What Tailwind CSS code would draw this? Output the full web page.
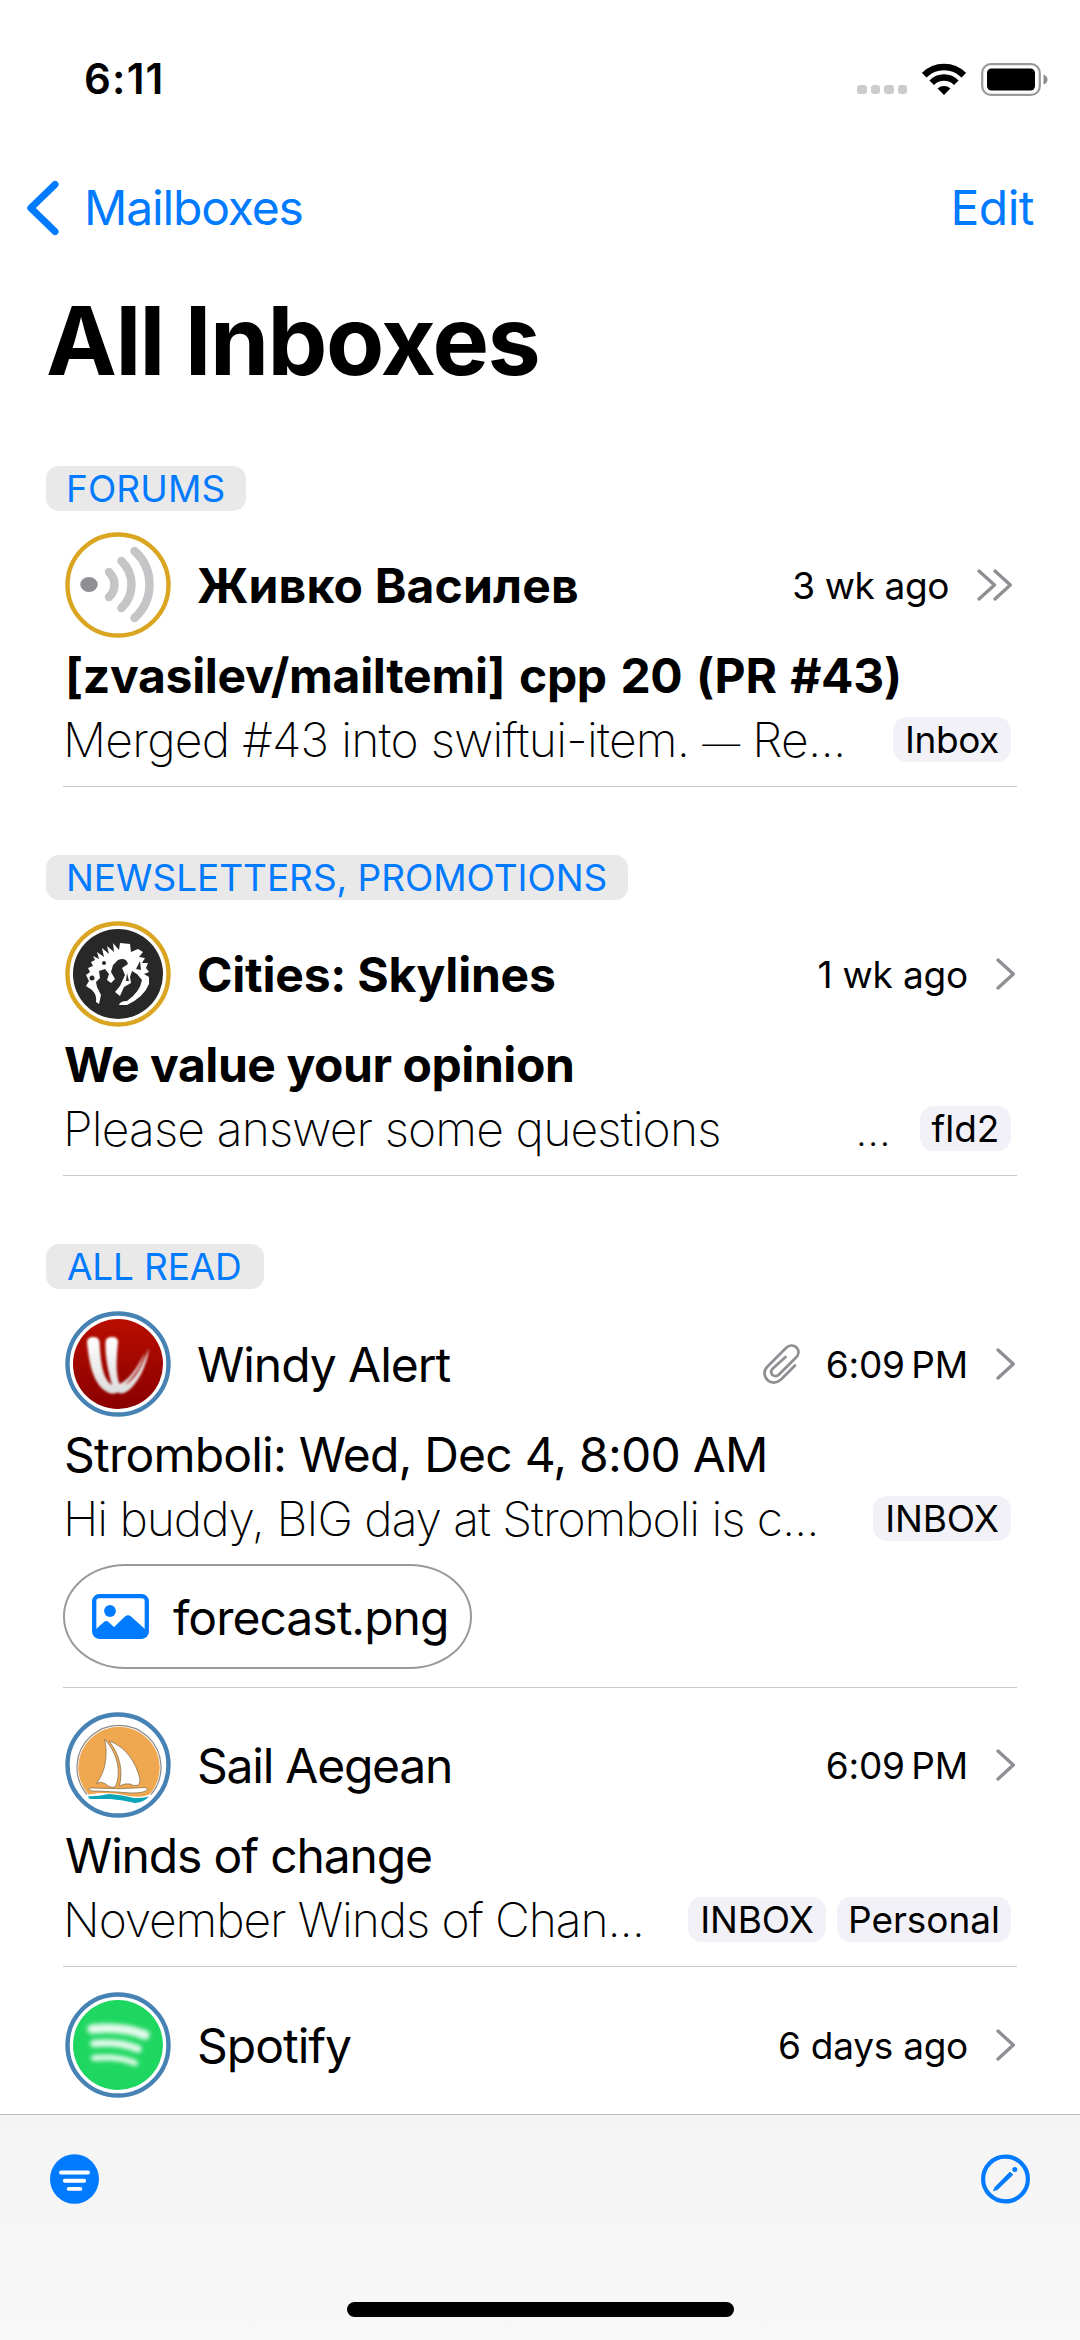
<!DOCTYPE html>
<html lang="en">
<head>
<meta charset="utf-8">
<title>All Inboxes</title>
<script src="https://cdn.jsdelivr.net/npm/@tailwindcss/browser@4"></script>
</head>
<body class="bg-white">
<div class="flex h-[2340px] w-[1080px] flex-col overflow-hidden bg-white font-['Inter',sans-serif] text-black">

  <!-- Status bar -->
  <div class="flex h-[158px] shrink-0 items-center justify-between pr-[32px] pl-[84px]">
    <span class="text-[42px] leading-none font-semibold tracking-[1.2px]">6:11</span>
    <div class="flex items-center">
      <div class="mt-[21px] mr-[15px] flex gap-[4px]">
        <i class="size-[9.5px] rounded-[3px] bg-[#cccccc]"></i>
        <i class="size-[9.5px] rounded-[3px] bg-[#cccccc]"></i>
        <i class="size-[9.5px] rounded-[3px] bg-[#cccccc]"></i>
        <i class="size-[9.5px] rounded-[3px] bg-[#cccccc]"></i>
      </div>
      <svg class="mr-[15px] h-8 w-11" viewBox="0 0 44 32" fill="none" stroke="#000" stroke-width="6.5">
        <path d="M2.2 12.2A28 28 0 0 1 41.8 12.2"/>
        <path d="M9.7 19.7A17.4 17.4 0 0 1 34.3 19.7"/>
        <path d="M22 32L15.6 25.5A9.5 9.5 0 0 1 28.4 25.5Z" fill="#000" stroke="none"/>
      </svg>
      <svg class="h-[33px] w-[67px]" viewBox="0 0 67 33">
        <rect x="1.2" y="1.2" width="57.6" height="30.6" rx="8.5" fill="none" stroke="#9a9a9a" stroke-width="2.2"/>
        <rect x="6" y="5.5" width="48" height="22" rx="4.5"/>
        <path d="M62.5 11.5Q66.5 13 66.5 16.5Q66.5 20 62.5 21.5Z" fill="#8c8c8c"/>
      </svg>
    </div>
  </div>

  <!-- Navigation -->
  <nav class="flex h-[99px] shrink-0 items-center justify-between pr-[46px] pl-[26px] text-[48px] leading-none text-[#007aff]">
    <a class="flex items-center">
      <svg class="mr-[25px] h-[56px] w-[33px]" viewBox="0 0 33 56" fill="none" stroke="currentColor" stroke-width="7" stroke-linecap="round" stroke-linejoin="round"><path d="M29 4.5L4.8 28L29 51.5"/></svg>
      <span class="tracking-[-1.15px]">Mailboxes</span>
    </a>
    <a class="tracking-[-0.49px]">Edit</a>
  </nav>

  <h1 class="flex h-[166px] shrink-0 items-center pl-[46px] text-[95px] leading-none font-bold tracking-[-1.53px]">All Inboxes</h1>

  <main class="min-h-0 flex-1 overflow-hidden pt-[43px]">

    <!-- Forums -->
    <section class="mb-[68px]">
      <h2 class="ml-[46px] flex h-[45px] w-[200px] items-center rounded-[13px] bg-[#e9e9e9] pl-[20px] text-[37px] leading-none tracking-[0.12px] text-[#007aff]">FORUMS</h2>
      <article class="mx-[63px] mt-[21px] border-b border-[#cbcbcc] pb-4">
        <header class="flex h-[106px] items-center pr-[5px] pl-[2px]">
          <svg class="size-[106px]" viewBox="0 0 106 106" fill="none">
            <circle cx="53" cy="53" r="50.5" stroke="#daa520" stroke-width="4.4"/>
            <ellipse cx="24" cy="52.5" rx="8.7" ry="7.4" fill="#8e8e93"/>
            <g stroke="#c5c5c7" stroke-width="8.5" stroke-linecap="round">
              <path d="M44 40A17 17 0 0 1 44 65"/>
              <path d="M56.5 29A32.6 32.6 0 0 1 56.5 76"/>
              <path d="M69.5 19A45 45 0 0 1 69.5 86"/>
            </g>
          </svg>
          <span class="ml-[26px] pt-[2px] text-[48px] leading-none font-bold tracking-[0.18px]">Живко Василев</span>
          <time class="mr-[28px] ml-auto text-[37px] leading-none tracking-[-0.39px]">3 wk ago</time>
          <svg class="h-8 w-[35px]" viewBox="0 0 35 32" fill="none" stroke="#8e8e93" stroke-width="3.3" stroke-linecap="round" stroke-linejoin="round"><path d="M2 2L17.5 16L2 30M18 2L33.3 16L18 30"/></svg>
        </header>
        <h3 class="mt-[7px] flex h-[60px] items-center pt-[2px] pl-[2px] text-[48px] leading-none font-bold tracking-[-0.3px] whitespace-pre [word-spacing:2.5px]">[zvasilev/mailtemi] cpp 20 (PR #43)</h3>
        <div class="mt-1 flex h-[61px] items-center pr-[6px]">
          <p class="text-[48px] leading-none font-[170] tracking-[-0.72px]">Merged #43 into swiftui-item. <span class="text-[38px]">—</span> Re...</p>
          <span class="ml-auto flex h-[45px] w-[118px] items-center justify-center rounded-[14px] bg-[#f2f1f7] text-[37px] leading-none tracking-[-0.45px]">Inbox</span>
        </div>
      </article>
    </section>

    <!-- Newsletters -->
    <section class="mb-[68px]">
      <h2 class="ml-[46px] flex h-[45px] w-[582px] items-center rounded-[13px] bg-[#e9e9e9] pl-[20px] text-[37px] leading-none tracking-[-0.04px] text-[#007aff]">NEWSLETTERS, PROMOTIONS</h2>
      <article class="mx-[63px] mt-[21px] border-b border-[#cbcbcc] pb-4">
        <header class="flex h-[106px] items-center pr-[2px] pl-[2px]">
          <svg class="size-[106px]" viewBox="0 0 106 106" fill="none">
            <circle cx="53" cy="53" r="50.5" stroke="#daa520" stroke-width="4.4"/>
            <circle cx="53" cy="53" r="45" fill="#282828"/>
            <path fill="#fff" d="M34 83L31 81Q32 74 27 69L21 65L24 60L21 54L25 51L23 47L28 45L26 41L30 39L28 35L34 38L32 31L39 36L37 27L44 33L42 25L49 31L48 22L54 29L55 22L65 23L66 31L73 28L78 31L74 36L80 37L77 42L83 42L81 47L84 51L79 53L84 56L84 63Q79 76 62 84L54 84Q55 80 62 80Q75 71 77 59L72 53L67 50L65 56L66 62L59 66L55 75L50 71L55 65L60 54L57 47L63 43Q61 36 53 39L48 44L46 51L50 58L46 62L42 59L44 53L40 48L34 50L35 57L31 61L32 66L36 74Z"/>
            <g fill="#282828"><circle cx="39" cy="42" r="2"/><circle cx="27" cy="57" r="2.5"/><path d="M71 48L75 40L76 49ZM61 60L62 52L64 60Z"/></g>
          </svg>
          <span class="ml-[26px] pt-[2px] text-[48px] leading-none font-bold tracking-[-0.21px]">Cities: Skylines</span>
          <time class="mr-[28px] ml-auto text-[37px] leading-none tracking-[-0.2px]">1 wk ago</time>
          <svg class="h-8 w-[19px]" viewBox="0 0 19 32" fill="none" stroke="#8e8e93" stroke-width="3.3" stroke-linecap="round" stroke-linejoin="round"><path d="M2 2L17.3 16L2 30"/></svg>
        </header>
        <h3 class="mt-[7px] flex h-[60px] items-center pt-[2px] pl-[1px] text-[48px] leading-none font-bold tracking-[-0.44px]">We value your opinion</h3>
        <div class="mt-1 flex h-[61px] items-center pr-[6px]">
          <p class="text-[48px] leading-none font-[170] tracking-[-0.85px]">Please answer some questions</p>
          <span class="mr-[30px] ml-auto text-[48px] leading-none font-[170] tracking-[-1.5px]">...</span>
          <span class="flex h-[45px] w-[91px] items-center justify-center rounded-[14px] bg-[#f2f1f7] text-[37px] leading-none">fld2</span>
        </div>
      </article>
    </section>

    <!-- All read -->
    <section>
      <h2 class="ml-[46px] flex h-[45px] w-[218px] items-center rounded-[13px] bg-[#e9e9e9] pl-[21px] text-[37px] leading-none tracking-[-0.19px] text-[#007aff]">ALL READ</h2>

      <article class="mx-[63px] mt-[22px] border-b border-[#cbcbcc] pb-[18px]">
        <header class="flex h-[106px] items-center pr-[2px] pl-[2px]">
          <svg class="size-[106px]" viewBox="0 0 106 106" fill="none">
            <defs>
              <linearGradient id="red" x1="0" y1="0" x2="0" y2="1"><stop offset="0" stop-color="#b80d00"/><stop offset="1" stop-color="#8a0000"/></linearGradient>
              <linearGradient id="silver" gradientUnits="userSpaceOnUse" x1="0" y1="26" x2="0" y2="84"><stop offset="0" stop-color="#fff"/><stop offset="1" stop-color="#dcdcdc"/></linearGradient>
              <filter id="soft"><feGaussianBlur stdDeviation=".9"/></filter>
            </defs>
            <circle cx="53" cy="53" r="50.5" stroke="#4682b4" stroke-width="4.4"/>
            <circle cx="53" cy="53" r="45" fill="url(#red)"/>
            <g filter="url(#soft)" fill="url(#silver)">
              <path d="M22 31Q22.500 26 28 26Q34 26 34.500 31C35.500 50 37.500 68 47 74C43 60 40 45 40.500 31Q41 26 47 26Q53 26 53 31C51 50 51 64 54.500 73C66 68 74 54 80 41C76 57 67 67 60 74C71 68 78 54 84 37C82 56 70 78 59 82Q56 83 53 81.500Q47 84 42 81C28 73 24 52 22 31Z"/>
            </g>
          </svg>
          <span class="ml-[26px] pt-[1px] text-[48px] leading-none tracking-[-1.05px]">Windy Alert</span>
          <svg class="mr-[26px] ml-auto h-[40px] w-[37px]" viewBox="0 0 37 40" fill="none" stroke="#8e8e93" stroke-width="2.7" stroke-linecap="round" stroke-linejoin="round"><path d="M32 21.5L18 35.5C13.5 39.5 8 39.5 4.500 36C.5 32 .5 26.5 4.500 22.5L23 4C26 1 30.5 .5 33.5 3.500C36.5 6.500 36 10.5 33 13.5L16 30.5C14 32.5 11.5 32.5 9.500 31C7.700 29 8 26.5 9.800 24.5L22.5 13"/></svg>
          <time class="mr-[28px] text-[37px] leading-none tracking-[-0.21px]">6:09&#8201;PM</time>
          <svg class="h-8 w-[19px]" viewBox="0 0 19 32" fill="none" stroke="#8e8e93" stroke-width="3.3" stroke-linecap="round" stroke-linejoin="round"><path d="M2 2L17.3 16L2 30"/></svg>
        </header>
        <h3 class="mt-[7px] flex h-[60px] items-center pt-[2px] pl-[1px] text-[48px] leading-none tracking-[-0.79px]">Stromboli: Wed, Dec 4, 8:00 AM</h3>
        <div class="mt-1 flex h-[61px] items-center pr-[6px]">
          <p class="text-[48px] leading-none font-[170] tracking-[-1.07px]">Hi buddy, BIG day at Stromboli is c...</p>
          <span class="ml-auto flex h-[45px] w-[138px] items-center justify-center rounded-[14px] bg-[#f2f1f7] text-[37px] leading-none tracking-[-0.14px]">INBOX</span>
        </div>
        <div class="mt-[15px] flex h-[105px] w-[409px] items-center rounded-[62px/52px] border-2 border-[#9a9a9e] pl-[27px]">
          <svg class="h-[45px] w-[57px]" viewBox="0 0 57 45">
            <rect x="2.2" y="2.2" width="52.6" height="40.6" rx="5" fill="none" stroke="#007aff" stroke-width="4.3"/>
            <circle cx="18" cy="17" r="5.9" fill="#007aff"/>
            <path fill="#007aff" d="M3 36L12 28Q14.5 26 17 28.5L22 33L33 22.5Q36 20 39 22.5L54 36V42H3Z"/>
          </svg>
          <span class="ml-[24px] pt-[2px] text-[48px] leading-none tracking-[-0.99px]">forecast.png</span>
        </div>
      </article>

      <article class="mx-[63px] mt-[24px] border-b border-[#cbcbcc] pb-4">
        <header class="flex h-[106px] items-center pr-[2px] pl-[2px]">
          <svg class="size-[106px]" viewBox="0 0 106 106" fill="none">
            <circle cx="53" cy="53" r="50.5" stroke="#4682b4" stroke-width="4.4"/>
            <path d="M22 82.5A42 42 0 1 1 86 82.5" stroke="#8b8b8b" stroke-width="1.2"/>
            <path d="M23.5 82.5A40.7 40.7 0 1 1 84.5 82.5Q76 86 64 84Q44 79 23.5 82.5Z" fill="#f0a850"/>
            <path d="M22.5 84.5Q34 84 44 82Q58 83 69 86Q76 86.5 84 84.5Q78 91 70 91Q58 88 45 87Q34 87 25 87Z" fill="#0aa5b7"/>
            <g fill="#fff" stroke="#8a7350" stroke-width=".8">
              <path d="M24 77Q24 75.5 28 76Q56 77.5 80 75.5Q84 76 81 79Q74 82 58 80.5Q48 79.5 28 79Q24 79 24 77Z"/>
              <path d="M39.5 27C43 42 41 59 31.5 71.5Q36 69 40 71.5Q46 77 50.5 74.5C56 62 54 43 39.5 27Z"/>
              <path d="M44 29C60 34 71 50 75 67Q75.5 72 72 73.5Q68 74 65 72Q60 71 54.5 74C58 58 55 43 44 29Z"/>
            </g>
          </svg>
          <span class="ml-[26px] pt-[2px] text-[48px] leading-none tracking-[-1.24px]">Sail Aegean</span>
          <time class="mr-[28px] ml-auto text-[37px] leading-none tracking-[-0.21px]">6:09&#8201;PM</time>
          <svg class="h-8 w-[19px]" viewBox="0 0 19 32" fill="none" stroke="#8e8e93" stroke-width="3.3" stroke-linecap="round" stroke-linejoin="round"><path d="M2 2L17.3 16L2 30"/></svg>
        </header>
        <h3 class="mt-[7px] flex h-[60px] items-center pt-[2px] pl-[2px] text-[48px] leading-none tracking-[-1.15px]">Winds of change</h3>
        <div class="mt-1 flex h-[61px] items-center gap-[11px] pr-[6px]">
          <p class="text-[48px] leading-none font-[170] tracking-[-1.12px]">November Winds of Chan...</p>
          <span class="ml-auto flex h-[45px] w-[138px] items-center justify-center rounded-[14px] bg-[#f2f1f7] text-[37px] leading-none tracking-[-0.14px]">INBOX</span>
          <span class="flex h-[45px] w-[174px] items-center justify-center rounded-[14px] bg-[#f2f1f7] text-[37px] leading-none tracking-[-0.04px]">Personal</span>
        </div>
      </article>

      <article class="mx-[63px] mt-[25px]">
        <header class="flex h-[106px] items-center pr-[2px] pl-[2px]">
          <svg class="size-[106px]" viewBox="0 0 106 106" fill="none">
            <defs><filter id="haze" x="-20%" y="-30%" width="140%" height="160%"><feGaussianBlur stdDeviation="2"/></filter></defs>
            <circle cx="53" cy="53" r="50.5" stroke="#4682b4" stroke-width="4.4"/>
            <circle cx="53" cy="53" r="45" fill="#1ed760"/>
            <g filter="url(#haze)" stroke="#fff" stroke-linecap="round" stroke-opacity=".88">
              <path d="M27 37Q58 34 80 43" stroke-width="9.5"/>
              <path d="M29 51.5Q55 49 73 57" stroke-width="7.5"/>
              <path d="M29 66Q54 64 70 71" stroke-width="6"/>
            </g>
          </svg>
          <span class="ml-[26px] pt-[2px] text-[48px] leading-none tracking-[-1.01px]">Spotify</span>
          <time class="mr-[28px] ml-auto text-[37px] leading-none tracking-[-0.27px]">6 days ago</time>
          <svg class="h-8 w-[19px]" viewBox="0 0 19 32" fill="none" stroke="#8e8e93" stroke-width="3.3" stroke-linecap="round" stroke-linejoin="round"><path d="M2 2L17.3 16L2 30"/></svg>
        </header>
      </article>
    </section>
  </main>

  <!-- Toolbar -->
  <footer class="flex h-[226px] shrink-0 flex-col items-center justify-between border-t border-[#bcbcbc] bg-linear-to-b from-[#f4f4f4] to-[#f8f8f8] pt-[39px] pb-[23px]">
    <div class="flex w-full justify-between px-[50px]">
      <svg class="h-[50px] w-[49px]" viewBox="0 0 49 50"><ellipse cx="24.5" cy="25" rx="24.5" ry="24.8" fill="#007aff"/><path d="M11 18.5H38M14.8 26.7H34.2M18.7 34.9H30.3" stroke="#fff" stroke-width="3.9" stroke-linecap="round"/></svg>
      <svg class="h-[50px] w-[49px]" viewBox="0 0 49 50"><circle cx="24.5" cy="25" r="22.4" fill="none" stroke="#007aff" stroke-width="4.2"/><path fill="#007aff" d="M12.5 36.8L14 33.3L29 18L31.8 20.8L16.5 35.5Z" stroke="#007aff" stroke-width=".8" stroke-linejoin="round"/><circle cx="33.8" cy="15.6" r="2.5" fill="#007aff"/></svg>
    </div>
    <div class="h-[15px] w-[387px] rounded-full bg-black"></div>
  </footer>
</div>
</body>
</html>
